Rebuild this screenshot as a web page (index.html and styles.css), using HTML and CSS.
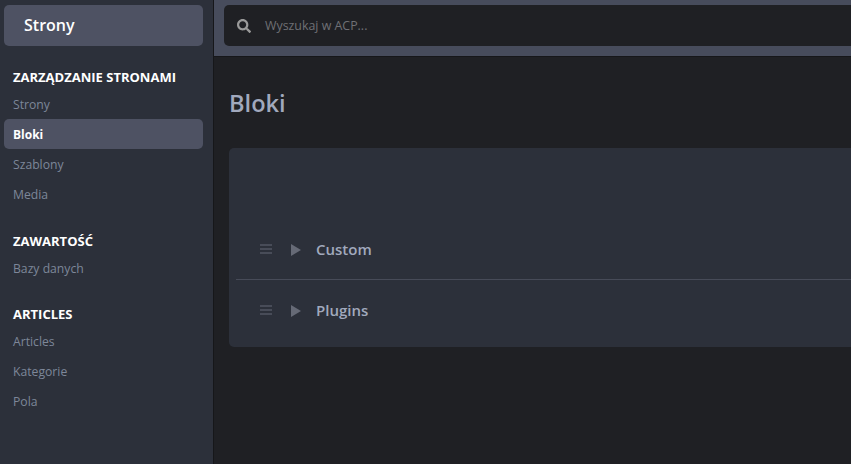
FILE: index.html
```html
<!DOCTYPE html>
<html lang="pl">
<head>
    <meta charset="UTF-8">
    <meta name="viewport" content="width=device-width, initial-scale=1.0">
    <title>Bloki</title>
    <link rel="stylesheet" href="styles.css">
</head>
<body>
    <aside class="sidebar">
        <div class="app-title">Strony</div>
        <nav class="menu">
            <h3 class="menu-head">ZARZĄDZANIE STRONAMI</h3>
            <a class="menu-item">Strony</a>
            <a class="menu-item active">Bloki</a>
            <a class="menu-item">Szablony</a>
            <a class="menu-item">Media</a>
            <h3 class="menu-head">ZAWARTOŚĆ</h3>
            <a class="menu-item">Bazy danych</a>
            <h3 class="menu-head">ARTICLES</h3>
            <a class="menu-item">Articles</a>
            <a class="menu-item">Kategorie</a>
            <a class="menu-item">Pola</a>
        </nav>
    </aside>
    <main class="main">
        <header class="topbar">
            <div class="search">
                <svg class="search-icon" viewBox="0 0 512 512"><path d="M505 442.7L405.3 343c-4.5-4.5-10.6-7-17-7H372c27.6-35.3 44-79.7 44-128C416 93.1 322.9 0 208 0S0 93.1 0 208s93.1 208 208 208c48.3 0 92.7-16.4 128-44v16.3c0 6.4 2.5 12.5 7 17l99.7 99.7c9.4 9.4 24.6 9.4 33.9 0l28.3-28.3c9.4-9.4 9.4-24.6.1-34zM208 336c-70.7 0-128-57.2-128-128 0-70.7 57.2-128 128-128 70.7 0 128 57.2 128 128 0 70.7-57.2 128-128 128z"/></svg>
                <span class="search-text">Wyszukaj w ACP...</span>
            </div>
        </header>
        <h1 class="page-title">Bloki</h1>
        <section class="card">
            <div class="row">
                <span class="drag"><i></i><i></i><i></i></span>
                <span class="arrow"></span>
                <span class="row-name">Custom</span>
            </div>
            <div class="row">
                <span class="drag"><i></i><i></i><i></i></span>
                <span class="arrow"></span>
                <span class="row-name">Plugins</span>
            </div>
        </section>
    </main>
</body>
</html>
```

FILE: styles.css
```css
html, body {
    height: 100%;
}
body {
    margin: 0;
    display: flex;
    overflow: hidden;
    font-family: "Open Sans", sans-serif;
    background-color: #1f2024;
}
.sidebar {
    flex: 0 0 213px;
    box-sizing: border-box;
    padding: 5px 10px 0 4px;
    background-color: #2c303a;
    width: 213px;
}
.app-title {
    height: 41px;
    line-height: 41px;
    padding-left: 20px;
    border-radius: 5px;
    background-color: #4e5263;
    color: #fff;
    font-size: 16px;
    font-weight: 600;
}
.menu {
    padding-top: 22px;
}
.menu-head {
    margin: 0 0 3.4px;
    padding-left: 9px;
    height: 18px;
    line-height: 18px;
    font-size: 13px;
    font-weight: 700;
    color: #fff;
}
.menu-item {
    display: block;
    height: 30px;
    line-height: 31px;
    padding-left: 9px;
    border-radius: 5px;
    font-size: 12.2px;
    color: #7d8799;
}
.menu-item.active {
    background-color: #4e5263;
    color: #fff;
    font-weight: 700;
    font-size: 12px;
}
.menu-item + .menu-head {
    margin-top: 22.14px;
}
.main {
    flex: 1;
    min-width: 0;
    border-left: 1px solid #16171a;
}
.topbar {
    height: 57px;
    box-sizing: border-box;
    padding: 5px 0 0 10px;
    background-color: #474c5c;
    border-bottom: 1px solid #16171a;
}
.search {
    display: flex;
    align-items: center;
    height: 41px;
    padding-left: 13px;
    border-radius: 5px 0 0 5px;
    background-color: #1f2024;
}
.search-icon {
    width: 14px;
    height: 14px;
    fill: #9a9a9a;
}
.search-text {
    margin-left: 14px;
    font-size: 12.4px;
    color: #6f7075;
}
.page-title {
    margin: 30px 0 29px 15px;
    height: 32px;
    line-height: 32px;
    font-size: 23.6px;
    font-weight: 600;
    color: #a1a9bd;
}
.card {
    margin-left: 15px;
    height: 199px;
    box-sizing: border-box;
    padding: 71px 0 0 7px;
    border-radius: 5px 0 0 5px;
    background-color: #2c303a;
}
.row {
    display: flex;
    align-items: center;
    height: 60px;
    padding-left: 24px;
}
.row + .row {
    border-top: 1px solid #474b58;
}
.drag {
    display: flex;
    flex-direction: column;
    gap: 2px;
    width: 12px;
}
.drag i {
    display: block;
    height: 2px;
    background-color: #484c58;
}
.arrow {
    margin: 1px 0 0 19px;
    border-left: 10px solid #666a76;
    border-top: 6px solid transparent;
    border-bottom: 6px solid transparent;
}
.row-name {
    margin-left: 15px;
    font-size: 15px;
    font-weight: 600;
    color: #a1a9bd;
}
```
